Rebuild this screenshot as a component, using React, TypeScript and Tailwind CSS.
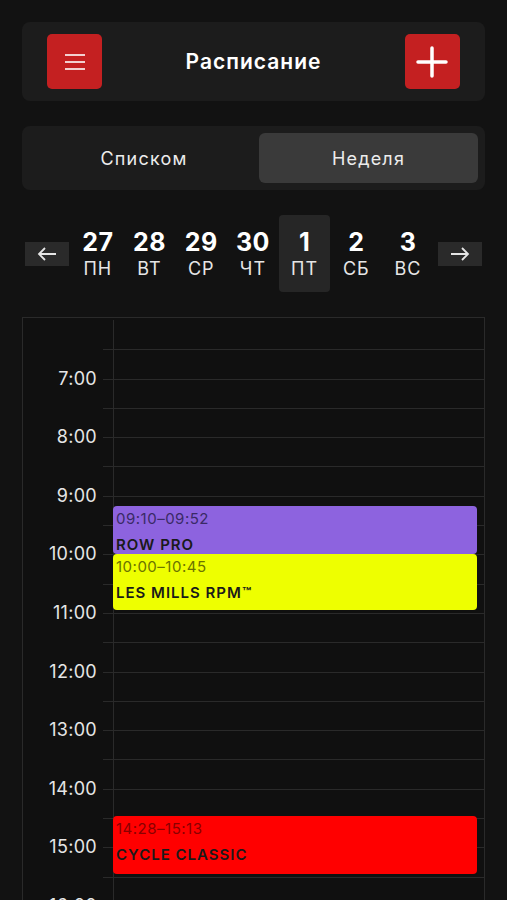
import React from "react";

type Ev = {
  start: number;
  shown: number;
  time: string;
  name: string;
  bg: string;
  timeColor: string;
};

const HOUR = 58.6;
const START = 6;

const days = [
  { n: "27", d: "ПН" },
  { n: "28", d: "ВТ" },
  { n: "29", d: "СР" },
  { n: "30", d: "ЧТ" },
  { n: "1", d: "ПТ", active: true },
  { n: "2", d: "СБ" },
  { n: "3", d: "ВС" },
];

const events: Ev[] = [
  {
    start: 9 + 10 / 60,
    shown: 10,
    time: "09:10–09:52",
    name: "ROW PRO",
    bg: "bg-[#8d63df]",
    timeColor: "text-[#3a2a66]",
  },
  {
    start: 10,
    shown: 10.95,
    time: "10:00–10:45",
    name: "LES MILLS RPM™",
    bg: "bg-[#eeff00]",
    timeColor: "text-[#6b7300]",
  },
  {
    start: 14 + 28 / 60,
    shown: 15.45,
    time: "14:28–15:13",
    name: "CYCLE CLASSIC",
    bg: "bg-[#ff0000]",
    timeColor: "text-[#8a0000]",
  },
];

// half-hour rows from 6:00 to 16:30
const rows = Array.from({ length: 22 }, (_, i) => START + i / 2);

const App: React.FC = () => {
  return (
    <div
      className="min-h-screen w-full bg-[#121212] text-white overflow-hidden"
      style={{ fontFamily: "Inter, 'Noto Sans', sans-serif" }}
    >
      {/* Header */}
      <div className="mx-[22px] pt-[22px]">
        <div className="flex items-center justify-between h-[79px] px-[25px] bg-[#1c1c1c] rounded-lg">
          <button className="w-[55px] h-[55px] rounded-[5px] bg-[#c42021] flex items-center justify-center">
            <svg width="22" height="18" viewBox="0 0 22 18">
              <path d="M1 2h20M1 9h20M1 16h20" stroke="#f3d0d0" strokeWidth="2" />
            </svg>
          </button>
          <h1 className="text-[21px] font-semibold tracking-[1px]">Расписание</h1>
          <button className="w-[55px] h-[55px] rounded-[5px] bg-[#c42021] flex items-center justify-center">
            <svg width="32" height="32" viewBox="0 0 32 32">
              <path d="M16 2v28M2 16h28" stroke="#ffffff" strokeWidth="3.5" strokeLinecap="round" />
            </svg>
          </button>
        </div>

        {/* Tabs */}
        <div className="mt-[25px] h-[64px] bg-[#1c1c1c] rounded-lg flex p-[7px]">
          <div className="flex-1 flex items-center justify-center text-[18px] tracking-[1.2px] text-[#ececec]">
            Списком
          </div>
          <div className="w-[219px] flex items-center justify-center rounded-md bg-[#3a3a3a] text-[18px] tracking-[1.2px] text-[#ececec]">
            Неделя
          </div>
        </div>
      </div>

      {/* Date strip */}
      <div className="mt-[25px] flex items-center px-[25px] h-[77px]">
        <button className="w-[44px] h-[24px] bg-[#2a2a2a] flex items-center justify-center">
          <svg width="20" height="14" viewBox="0 0 20 14">
            <path d="M19 7H2M8 1L2 7l6 6" stroke="#e5e5e5" strokeWidth="1.8" fill="none" />
          </svg>
        </button>
        <div className="flex ml-[3px]">
          {days.map((d) => (
            <div
              key={d.n}
              className={`w-[51.7px] h-[77px] flex flex-col items-center justify-center rounded ${
                d.active ? "bg-[#262626]" : ""
              }`}
            >
              <span className="text-[25px] font-bold leading-[28px] tracking-[0.5px]">{d.n}</span>
              <span className="text-[18px] leading-[22px] mt-[2px] tracking-[1px] text-[#e6e6e6]">{d.d}</span>
            </div>
          ))}
        </div>
        <button className="ml-auto w-[44px] h-[24px] bg-[#2a2a2a] flex items-center justify-center">
          <svg width="20" height="14" viewBox="0 0 20 14">
            <path d="M1 7h17M12 1l6 6-6 6" stroke="#e5e5e5" strokeWidth="1.8" fill="none" />
          </svg>
        </button>
      </div>

      {/* Calendar */}
      <div className="mx-[22px] mt-[25px] border border-[#2a2a2a] bg-[#101010] pt-[2px]">
        <div className="relative">
          {rows.map((h, i) => {
            const full = Number.isInteger(h);
            return (
              <div key={h} className="flex h-[29.3px]">
                <div className="w-[80px] relative">
                  {full && i > 0 && (
                    <span className="absolute right-[6px] top-0 -translate-y-1/2 text-[18px] tracking-[0.3px] text-[#e6e6e6] leading-none">
                      {h}:00
                    </span>
                  )}
                </div>
                <div className={`w-[10px] ${i > 0 ? "border-t border-[#2a2a2a]" : ""}`} />
                <div className={`flex-1 border-l border-[#2a2a2a] ${i > 0 ? "border-t" : ""}`} />
              </div>
            );
          })}

          {/* Events */}
          {events.map((e) => (
            <div
              key={e.name}
              className={`absolute left-[90px] right-[7px] rounded-[4px] ${e.bg} px-[3px] pt-[4px] overflow-hidden`}
              style={{ top: (e.start - START) * HOUR, height: (e.shown - e.start) * HOUR }}
            >
              <div className={`text-[15px] tracking-[0.5px] leading-[18px] ${e.timeColor}`}>{e.time}</div>
              <div className="text-[15px] font-semibold tracking-[1px] leading-[18px] mt-[8px] text-[#1a1a1a]">
                {e.name}
              </div>
            </div>
          ))}
        </div>
      </div>
    </div>
  );
};

export default App;
